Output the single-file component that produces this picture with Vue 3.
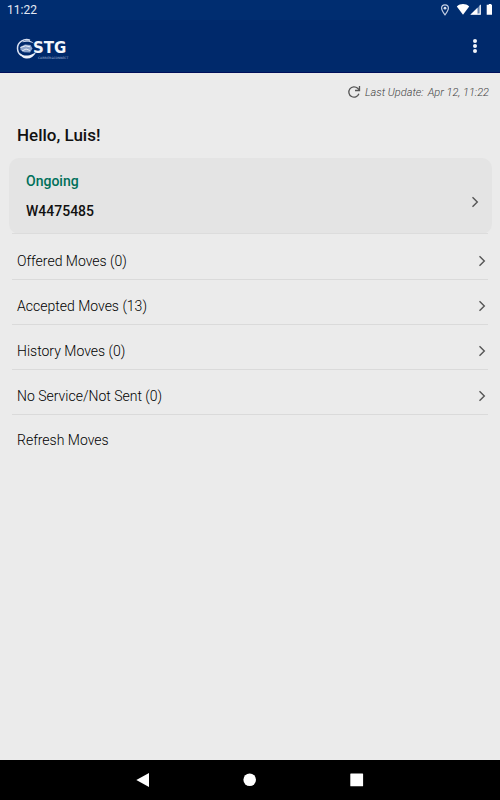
<script setup>
const rows = [
  { label: 'Offered Moves', count: 0 },
  { label: 'Accepted Moves', count: 13 },
  { label: 'History Moves', count: 0 },
  { label: 'No Service/Not Sent', count: 0 },
]
</script>

<template>
  <div class="screen">
    <div class="status">
      <span class="clock">11:22</span>
      <svg class="status-icons" width="52" height="14" viewBox="0 0 52 14" aria-hidden="true">
        <path d="M5 1.800c-2 0-3.400 1.400-3.400 3.300C1.600 7.500 5 11.800 5 11.800S8.400 7.500 8.400 5.100C8.400 3.200 7 1.800 5 1.800z" fill="none" stroke="#c3cfe4" stroke-width="1.200" />
        <circle cx="5" cy="5.200" r="1.400" fill="#dbe3f0" />
        <path d="M16.800 3.400C20.500.300 25.500.300 29.200 3.400L23 11.800z" fill="#fff" />
        <path d="M30.300 11.800L40.800 1.400v10.400z" fill="#5f7fae" />
        <path d="M30.300 11.800L37.500 4.700v7.100z" fill="#fff" />
        <path d="M39.600 2.600l1.200-1.200v10.400h-3.500v-1.200h2.300z" fill="#fff" />
        <path d="M47.500 1.700h1.300V.900h2.400v.8h.8v10.100h-5.300V1.700z" fill="#fff" />
      </svg>
    </div>

    <header class="bar">
      <div class="logo">
        <svg class="emblem" width="23" height="22" viewBox="0 0 23 22" aria-hidden="true">
          <path d="M14 2.200C8 .2 1.500 4 1.500 10.200c0 3.200 1.500 5.800 4 7.400" fill="none" stroke="#d6def0" stroke-width="1.500" />
          <path d="M6 4.200C10 .8 15.500 2 18 5.500c-4-2.200-8-2.200-12-1.300z" fill="#c6d2e7" />
          <path d="M4.200 9L9 6.500l5.500.5 2 3.500-2.500 4-6-.3L4.500 12z" fill="#8da4cb" />
          <path d="M4.500 9.500l5-1.700 4.500 1M6 13l4-2 4 1.500" fill="none" stroke="#e6ecf7" stroke-width="1" />
          <path d="M3.500 15c3.500 3 8.500 3.400 13 1l3.500-1.500c-2.200 4.300-6 6.500-10 6-3.200-.4-5.500-2.500-6.500-5.500z" fill="#edf1f9" />
        </svg>
        <div class="wordmark">
          <span class="brand">STG</span>
          <span class="tagline">CARRIER&amp;CONNECT</span>
        </div>
      </div>
      <button class="more" type="button" aria-label="More options">
        <svg width="6" height="16" viewBox="0 0 6 16" fill="#f1f4fa">
          <circle cx="3" cy="3" r="2" /><circle cx="3" cy="8" r="2" /><circle cx="3" cy="13" r="2" />
        </svg>
      </button>
    </header>

    <main class="content">
      <div class="update">
        <svg width="14" height="14" viewBox="0 0 14 14" aria-hidden="true" fill="none" stroke="#555" stroke-width="1.300">
          <path d="M11.900 8.800A5.200 5.200 0 1 1 10.700 3.300L12.500 5.200" />
          <path d="M12.500 1v4.500H8" />
        </svg>
        <span>Last Update:</span>
        <span>Apr 12, 11:22</span>
      </div>

      <h1 class="hello">Hello, Luis!</h1>

      <button class="card" type="button">
        <span class="card-text">
          <span class="ongoing">Ongoing</span>
          <span class="order">W4475485</span>
        </span>
        <svg class="chevron" width="8" height="12" viewBox="0 0 8 12"><path d="M1.500 1.200L6.300 6 1.500 10.800" /></svg>
      </button>

      <nav class="list">
        <button v-for="row in rows" :key="row.label" class="row" type="button">
          <span>{{ row.label }} ({{ row.count }})</span>
          <svg class="chevron" width="8" height="12" viewBox="0 0 8 12"><path d="M1.500 1.200L6.300 6 1.500 10.800" /></svg>
        </button>
        <button class="row last" type="button">Refresh Moves</button>
      </nav>
    </main>

    <footer class="system">
      <button type="button" aria-label="Back">
        <svg width="14" height="14" viewBox="0 0 14 14"><path d="M.300 7L13 0v14z" /></svg>
      </button>
      <button type="button" aria-label="Home">
        <svg width="14" height="14" viewBox="0 0 14 14"><circle cx="6.700" cy="6.700" r="6.300" /></svg>
      </button>
      <button type="button" aria-label="Recents">
        <svg width="14" height="14" viewBox="0 0 14 14"><rect x=".3" y=".5" width="12.800" height="12.800" rx=".6" /></svg>
      </button>
    </footer>
  </div>
</template>

<style>
body {
  margin: 0;
}
</style>

<style scoped>
.screen {
  min-height: 100vh;
  display: flex;
  flex-direction: column;
  background: #ebebeb;
  color: #111;
  font-family: Roboto, "Liberation Sans", sans-serif;
}
button {
  font: inherit;
  color: inherit;
  background: none;
  border: 0;
  margin: 0;
  padding: 0;
  text-align: left;
}
svg {
  display: block;
  flex: none;
}
.status {
  display: flex;
  align-items: center;
  justify-content: space-between;
  height: 20px;
  padding: 0 8px 0 7px;
  background: #002d70;
  color: #e4eaf4;
  font-size: 12px;
}
.bar {
  display: flex;
  align-items: center;
  justify-content: space-between;
  height: 52px;
  padding: 0 22px 0 16px;
  background: #00296b;
  border-bottom: 1px solid #00105a;
}
.logo {
  display: flex;
  align-items: center;
  padding-top: 6px;
}
.wordmark {
  display: flex;
  flex-direction: column;
  padding-top: 3px;
  margin-left: -6px;
  color: #f4f6fb;
  font-family: "DejaVu Sans", sans-serif;
}
.brand {
  font-size: 15px;
  line-height: 16px;
  font-weight: 700;
}
.tagline {
  padding-left: 5px;
  font-size: 3px;
  line-height: 5px;
  color: #a9b9d7;
}
.content {
  flex: 1;
}
.update {
  display: flex;
  align-items: center;
  justify-content: flex-end;
  gap: 4px;
  height: 38px;
  padding-right: 11px;
  color: #444;
  font-size: 11px;
  font-style: italic;
  font-weight: 300;
}
.hello {
  margin: 0;
  padding: 12px 17px 11px;
  font-size: 17px;
  line-height: 24px;
  font-weight: 500;
}
.card {
  display: flex;
  align-items: center;
  justify-content: space-between;
  width: calc(100% - 17px);
  height: 76px;
  margin: 0 8px 0 9px;
  padding: 0 13px 0 17px;
  border-radius: 10px;
  background: #e4e4e4;
}
.card-text {
  display: flex;
  flex-direction: column;
  gap: 10px;
  font-size: 14px;
  line-height: 20px;
  font-weight: 500;
}
.card .chevron {
  margin-top: 12px;
}
.ongoing {
  color: #00705a;
}
.chevron path {
  fill: none;
  stroke: #555;
  stroke-width: 1.4;
}
.list {
  margin: -1px 12px 0;
  padding-top: 1px;
  border-top: 1px solid #dcdcdc;
}
.row {
  display: flex;
  align-items: center;
  justify-content: space-between;
  width: 100%;
  height: 45px;
  padding: 7px 2px 0 5px;
  border-bottom: 1px solid #dadada;
  box-sizing: border-box;
  color: #000;
  font-size: 14px;
  font-weight: 300;
}
.row.last {
  padding-top: 5px;
  border-bottom: 0;
}
.system {
  display: flex;
  align-items: center;
  justify-content: center;
  gap: 93px;
  height: 40px;
  background: #000;
}
.system svg {
  fill: #fff;
}
</style>
